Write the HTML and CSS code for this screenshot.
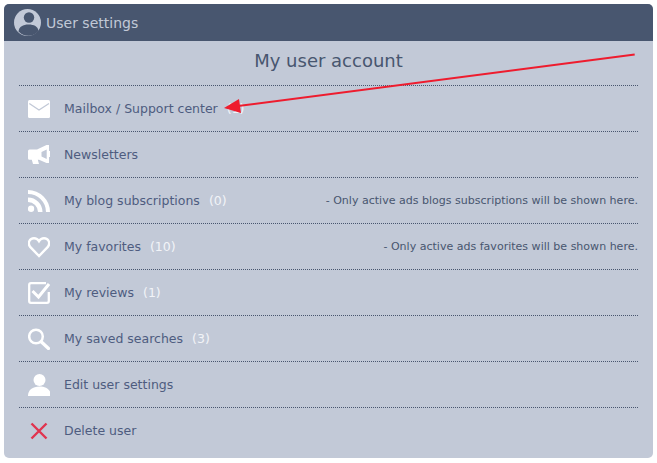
FILE: index.html
```html
<!DOCTYPE html>
<html lang="en">
<head>
<meta charset="utf-8">
<title>User settings</title>
<link rel="stylesheet" href="styles.css">
</head>
<body>
<main class="panel">
  <header class="panel-head">
    <svg class="avatar" viewBox="0 0 27 27"><circle cx="13.500" cy="13.500" r="13.500" fill="#c2c9d7"/><circle cx="15" cy="8.500" r="5.200" fill="#48566f"/><path d="M4.500 22.500c.6-5 4.500-7 10-7s9.500 2 10 6.500a13.500 13.500 0 0 1-20 .5z" fill="#48566f"/></svg>
    <span class="head-title">User settings</span>
  </header>
  <h1 class="title">My user account</h1>
  <ul class="menu">
    <li class="row">
      <svg class="icon" viewBox="0 0 22 22"><rect x="0" y="2" width="22" height="18" rx="1.500" fill="#fff"/><path d="M1.300 5.500 11 12l10-6.500" fill="none" stroke="#c2c9d7" stroke-width="1.300"/></svg>
      <span class="label">Mailbox / Support center</span><span class="count">(1)</span>
    </li>
    <li class="row">
      <svg class="icon" viewBox="0 0 22 22"><path fill-rule="evenodd" d="M0 7Q0 5.500 1.500 5.500H9L18.500 1H21V7H22V13H21V19H18.500L11 15.800H9.800L11 20H5L3.800 15.800H1.500Q0 15.800 0 14.300ZM18.700 5.500 13.500 8V12.500L18.700 15Z" fill="#fff"/></svg>
      <span class="label">Newsletters</span>
    </li>
    <li class="row">
      <svg class="icon" viewBox="0 0 22 22"><circle cx="3" cy="18.800" r="3.200" fill="#fff"/><path d="M0 7.500V12A10 10 0 0 1 10 22H14.500A14.500 14.500 0 0 0 0 7.500Z" fill="#fff"/><path d="M0 0V4A18 18 0 0 1 18 22H22A22 22 0 0 0 0 0Z" fill="#fff"/></svg>
      <span class="label">My blog subscriptions</span><span class="count">(0)</span>
      <span class="note">- Only active ads blogs subscriptions will be shown here.</span>
    </li>
    <li class="row">
      <svg class="icon" viewBox="0 0 22 22"><path d="M11 20 2.400 11.200C-1 7 1.700 2.200 6 2.200 8.400 2.200 10 3.500 11 5.200 12 3.500 13.600 2.200 16 2.200 20.300 2.200 23 7 19.600 11.200Z" fill="none" stroke="#fff" stroke-width="2.400"/></svg>
      <span class="label">My favorites</span><span class="count">(10)</span>
      <span class="note">- Only active ads favorites will be shown here.</span>
    </li>
    <li class="row">
      <svg class="icon" viewBox="0 0 22 22"><path d="M18 1.200H3Q1.200 1.200 1.200 3V19Q1.200 20.800 3 20.800H19Q20.800 20.800 20.800 19V10" fill="none" stroke="#fff" stroke-width="2.300"/><path d="M4.500 9 10.500 15 21 2" fill="none" stroke="#fff" stroke-width="3"/></svg>
      <span class="label">My reviews</span><span class="count">(1)</span>
    </li>
    <li class="row">
      <svg class="icon" viewBox="0 0 22 22"><circle cx="8" cy="8.500" r="6.800" fill="none" stroke="#fff" stroke-width="2.500"/><path d="M13.500 14 20.500 20.500" fill="none" stroke="#fff" stroke-width="3.200" stroke-linecap="round"/></svg>
      <span class="label">My saved searches</span><span class="count">(3)</span>
    </li>
    <li class="row">
      <svg class="icon" viewBox="0 0 22 22"><circle cx="11.500" cy="6" r="6" fill="#fff"/><path d="M0 22C0 16 4.500 12.500 11.500 12.500S23 16 23 22Z" fill="#fff"/></svg>
      <span class="label">Edit user settings</span>
    </li>
    <li class="row">
      <svg class="icon" viewBox="0 0 22 22"><path d="M3.500 3.500 18.500 18.500M18.500 3.500 3.500 18.500" fill="none" stroke="#e0344f" stroke-width="2.400"/></svg>
      <span class="label">Delete user</span>
    </li>
  </ul>
  <svg class="arrow" viewBox="0 0 657 463"><path d="M634.700 54.500 236 106.300" fill="none" stroke="#ee1c2e" stroke-width="2"/><path d="M224 108 239 99 241 113Z" fill="#ee1c2e"/></svg>
</main>
</body>
</html>
```

FILE: styles.css
```css
* { box-sizing: border-box; }
html, body { margin: 0; padding: 0; background: #fff; }
body { width: 657px; height: 463px; padding: 4px; font-family: Verdana, "DejaVu Sans", sans-serif; }
.panel { width: 649px; height: 454px; background: #c2c9d7; border-radius: 5px; overflow: hidden; }
.panel-head { height: 37px; background: #48566f; display: flex; align-items: center; padding-left: 10px; gap: 5px; }
.avatar { width: 27px; height: 27px; flex: none; }
.head-title { font-size: 14px; color: #c2c9d7; }
.title { margin: 0; height: 44px; padding-top: 9px; font-size: 18px; line-height: 22px; font-weight: 400; color: #48566f; text-align: center; }
.menu { list-style: none; margin: 0 15px; padding: 0; width: 619px; }
.row { height: 46px; border-top: 1px dotted #48566f; display: flex; align-items: center; padding-left: 9px; font-size: 12.500px; color: #4e5c7f; }
.icon { width: 22px; height: 22px; flex: none; margin: 1px 14px 0 0; }
.count { color: #f2f4f8; margin-left: 9px; }
.note { margin-left: auto; font-size: 11.040px; color: #48566f; }
.arrow { position: absolute; left: 0; top: 0; width: 657px; height: 463px; pointer-events: none; }
```
